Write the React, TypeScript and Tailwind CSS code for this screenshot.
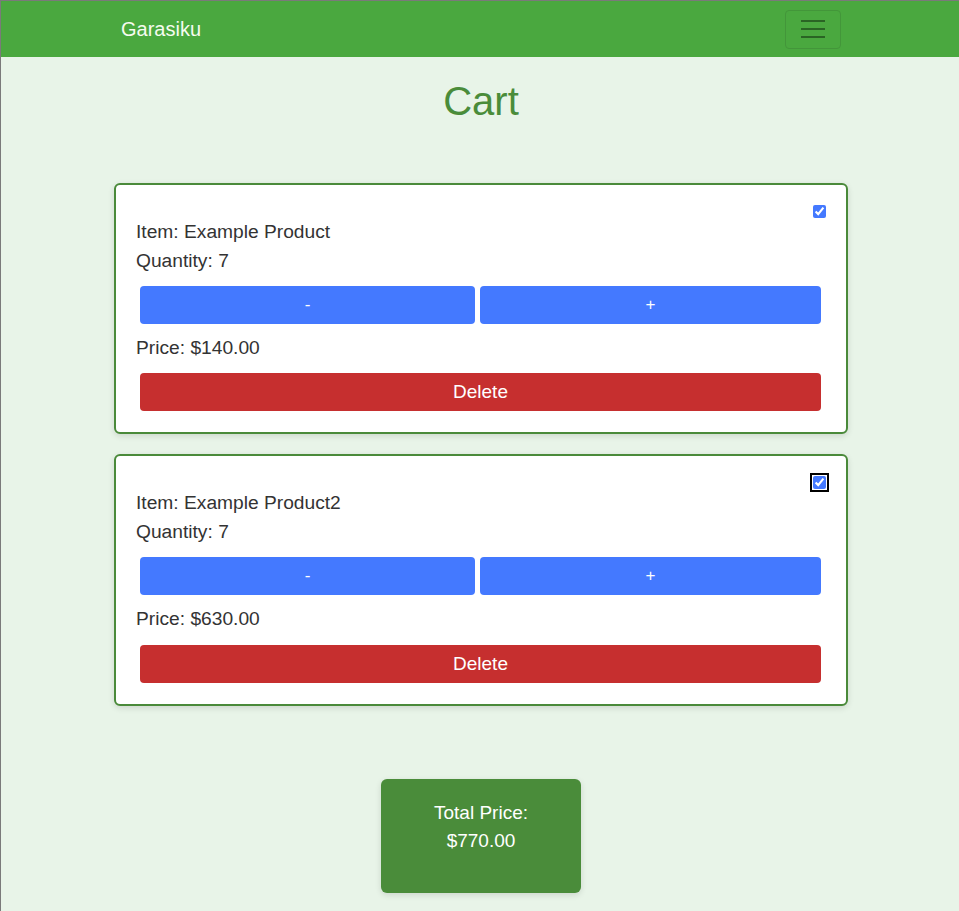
import { useState } from 'react';

type Item = { id: number; name: string; qty: number; unit: number; checked: boolean };

function CartCard({ item, focused, onChange }: { item: Item; focused?: boolean; onChange: (i: Item) => void }) {
  return (
    <div className="rounded-md border-2 border-[#4a8a3a] bg-white px-[20px] pt-[20px] pb-[21px] shadow-[0_2px_6px_rgba(0,0,0,0.12)]">
      <div className="flex h-[13px] justify-end">
        <input
          type="checkbox"
          checked={item.checked}
          onChange={() => onChange({ ...item, checked: !item.checked })}
          className={
            'm-0 h-[13px] w-[13px] accent-[#4479ff] ' +
            (focused ? 'rounded-[3px] outline-2 outline-offset-1 outline-black' : '')
          }
        />
      </div>
      <p className="leading-[28.8px]">Item: {item.name}</p>
      <p className="leading-[28.8px]">Quantity: {item.qty}</p>
      <div className="mt-[10px] mr-[5px] ml-[4px] flex gap-[5px]">
        <button
          onClick={() => onChange({ ...item, qty: Math.max(1, item.qty - 1) })}
          className="h-[38px] w-[335px] rounded-[4px] bg-[#4479ff] text-[17px] text-white"
        >
          -
        </button>
        <button
          onClick={() => onChange({ ...item, qty: item.qty + 1 })}
          className="h-[38px] flex-1 rounded-[4px] bg-[#4479ff] text-[17px] text-white"
        >
          +
        </button>
      </div>
      <p className="mt-[10px] leading-[28.8px]">Price: ${(item.qty * item.unit).toFixed(2)}</p>
      <div className="mt-[11px] mr-[5px] ml-[4px]">
        <button className="h-[38px] w-full rounded-[4px] bg-[#c62f2f] text-[19px] text-white">Delete</button>
      </div>
    </div>
  );
}

export default function App() {
  const [items, setItems] = useState<Item[]>([
    { id: 1, name: 'Example Product', qty: 7, unit: 20, checked: true },
    { id: 2, name: 'Example Product2', qty: 7, unit: 90, checked: true },
  ]);

  const total = items.filter((i) => i.checked).reduce((s, i) => s + i.qty * i.unit, 0);
  const update = (next: Item) => setItems(items.map((i) => (i.id === next.id ? next : i)));

  return (
    <div className="min-h-[911px] border-t border-l border-[#7a7a7a] bg-[#e8f4e8] font-['Liberation_Sans',Arial,sans-serif] text-[19.2px] text-[#333]">
      <nav className="flex h-[56px] items-center justify-between bg-[#4aa83f] pr-[118px] pl-[120px]">
        <span className="text-[20px] text-[#f6fbef]">Garasiku</span>
        <button className="flex h-[39px] w-[56px] flex-col items-center justify-center gap-[6px] rounded-[4px] border border-[#43963a]">
          <span className="h-[2px] w-[24px] bg-[#2a6424]" />
          <span className="h-[2px] w-[24px] bg-[#2a6424]" />
          <span className="h-[2px] w-[24px] bg-[#2a6424]" />
        </button>
      </nav>

      <main className="pl-[2px]">
        <h1 className="mt-[20px] text-center text-[40px] leading-[48px] text-[#4a8c3a]">Cart</h1>

        <div className="mx-auto mt-[58px] flex w-[734px] flex-col gap-[20px]">
          {items.map((item, idx) => (
            <CartCard key={item.id} item={item} focused={idx === 1} onChange={update} />
          ))}
        </div>

        <div className="mx-auto mt-[73px] w-[200px] rounded-md bg-[#4a8c3a] pt-[20px] pb-[38px] text-center text-white shadow-[0_2px_6px_rgba(0,0,0,0.12)]">
          <p className="text-[19px] leading-[28px]">Total Price:</p>
          <p className="text-[19px] leading-[28px]">${total.toFixed(2)}</p>
        </div>
      </main>
    </div>
  );
}
